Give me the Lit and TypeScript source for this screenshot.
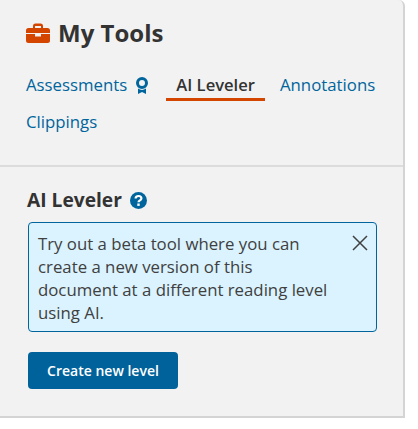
import { LitElement, html, css } from "lit";
import { customElement } from "lit/decorators.js";

@customElement("app-root")
export class AppRoot extends LitElement {
  static styles = css`
    :host { display: block; font-family: "Open Sans", sans-serif; background: #fff; height: 429px; }
    * { box-sizing: border-box; }
    .panel { width: 405px; height: 418px; background: #f2f2f2; border-right: 2px solid #d4d4d4; border-bottom: 2px solid #d4d4d4; border-top-right-radius: 6px; }
    .head { height: 167px; border-bottom: 2px solid #dcdcdc; padding: 16px 26px 0; }
    .title { display: flex; align-items: center; gap: 8px; height: 34px; margin: 0; font-size: 24px; line-height: 34px; font-weight: 700; color: #333; }
    .tabs { display: flex; flex-wrap: wrap; align-items: flex-start; margin-top: 22px; column-gap: 15px; row-gap: 8px; }
    .tab { display: flex; align-items: center; gap: 9px; height: 26px; font-size: 16.8px; line-height: 26px; color: #00659c; white-space: nowrap; }
    .tab svg { margin-right: 3px; }
    .tab.active { color: #333; font-weight: 600; padding: 0 10px; height: 29px; align-items: flex-start; border-bottom: 3px solid #d44500; font-size: 16.6px; }
    .body { padding: 20px 27px 0; }
    .sub { display: flex; align-items: center; gap: 8px; height: 26px; margin: 0; font-size: 19.2px; line-height: 26px; font-weight: 700; color: #333; }
    .alert { position: relative; margin: 9px 0 0 1px; width: 349px; height: 110px; background: #daf3ff; border: 1px solid #00659c; border-radius: 4px; padding: 9px 44px 0 9px; font-size: 16.8px; line-height: 23px; color: #404040; }
    .close { position: absolute; top: 12px; right: 8px; width: 16px; height: 16px; padding: 0; background: none; border: 0; display: block; }
    .btn { display: block; margin: 20px 0 0 1px; width: 150px; height: 37px; border: 0; border-radius: 4px; background: #00629b; color: #fff; font: 600 14px "Open Sans", sans-serif; }
    svg { display: block; flex: none; }
  `;
  render() {
    return html`<div class="panel">
      <div class="head">
        <h1 class="title">
          <svg width="24" height="20" viewBox="0 0 24 20"><path fill="#d44500" d="M7 5V3a2.500 2.500 0 0 1 2.500-2.500h5A2.500 2.500 0 0 1 17 3v2h4.500A2.500 2.500 0 0 1 24 7.500V10H0V7.500A2.500 2.500 0 0 1 2.500 5zM9 5h6V3H9zM0 11h9v2.500h6V11h9v6.500a2.500 2.500 0 0 1-2.500 2.500h-19A2.500 2.500 0 0 1 0 17.500z"/></svg>
          My Tools
        </h1>
        <div class="tabs">
          <div class="tab">Assessments
            <svg width="12" height="17" viewBox="0 0 12 17"><circle cx="6" cy="6" r="4.500" fill="none" stroke="#00659c" stroke-width="3"/><path fill="#00659c" d="M2 11.500l2 1 2 .5 2-.5 2-1V17l-4-2-4 2z"/></svg>
          </div>
          <div class="tab active">AI Leveler</div>
          <div class="tab">Annotations</div>
          <div class="tab">Clippings</div>
        </div>
      </div>
      <div class="body">
        <h2 class="sub">AI Leveler
          <svg width="17" height="17" viewBox="0 0 17 17"><circle cx="8.500" cy="8.500" r="8.500" fill="#00659c"/><path fill="none" stroke="#fff" stroke-width="2.200" d="M5.600 6.600c0-1.700 1.300-2.600 2.900-2.600s2.900.9 2.900 2.400c0 2-2.900 1.900-2.900 3.900"/><rect x="7.300" y="11.500" width="2.400" height="2.400" fill="#fff"/></svg>
        </h2>
        <div class="alert">Try out a beta tool where you can create a new version of this document at a different reading level using AI.
          <button class="close" aria-label="Close"><svg width="16" height="16" viewBox="0 0 16 16"><path stroke="#404040" stroke-width="1.500" fill="none" d="M1 1l14 14M15 1L1 15"/></svg></button>
        </div>
        <button class="btn">Create new level</button>
      </div>
    </div>`;
  }
}
